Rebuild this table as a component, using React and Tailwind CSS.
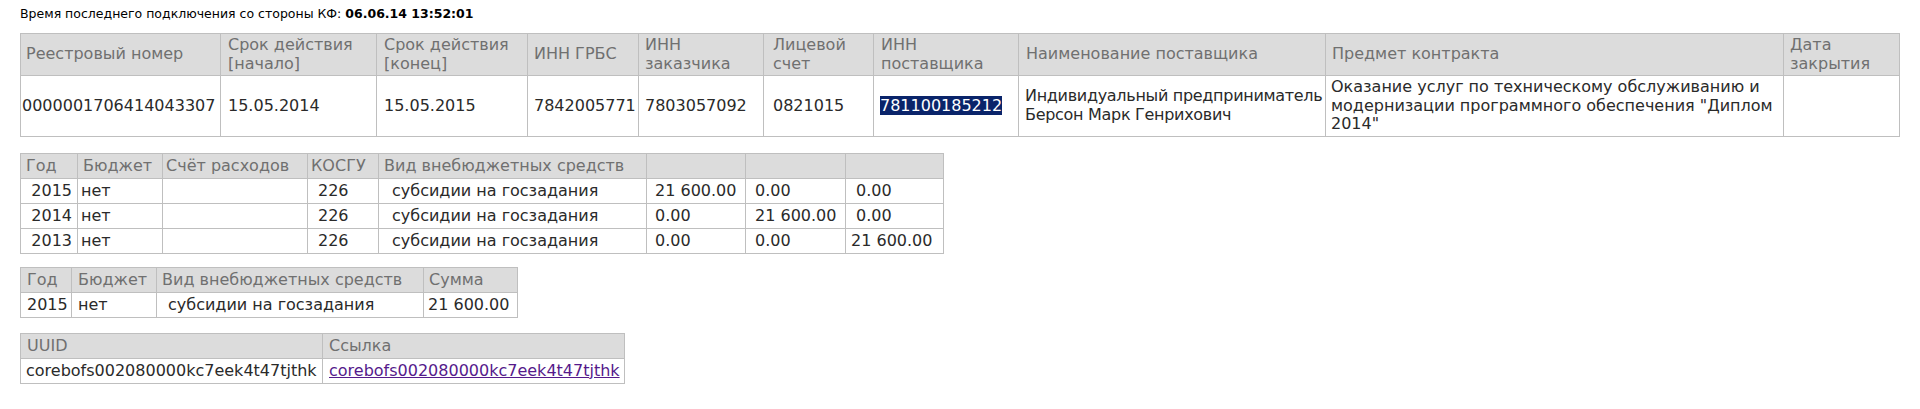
const th = "border border-[#bfbfbf] bg-[#dcdcdc] text-left align-middle font-normal text-[#707070]";
const td = "border border-[#bfbfbf] align-middle text-[#2a2a2a]";

const budgetRows = [
  { year: "2015", a: "21 600.00", b: "0.00", c: "0.00" },
  { year: "2014", a: "0.00", b: "21 600.00", c: "0.00" },
  { year: "2013", a: "0.00", b: "0.00", c: "21 600.00" },
];

function ContractTable() {
  return (
    <table className="table-fixed border-collapse leading-[18.5px]" style={{ width: 1879 }}>
      <colgroup>
        <col className="w-[200px]" />
        <col className="w-[156px]" />
        <col className="w-[151px]" />
        <col className="w-[111px]" />
        <col className="w-[125px]" />
        <col className="w-[110px]" />
        <col className="w-[145px]" />
        <col className="w-[307px]" />
        <col className="w-[458px]" />
        <col className="w-[116px]" />
      </colgroup>
      <thead>
        <tr>
          <th className={`${th} py-[2px] pl-[5px] pr-[2px]`}>Реестровый номер</th>
          <th className={`${th} py-[2px] pl-[7px] pr-[2px]`}>Срок действия [начало]</th>
          <th className={`${th} py-[2px] pl-[7px] pr-[2px]`}>Срок действия [конец]</th>
          <th className={`${th} py-[2px] pl-[6px] pr-[2px]`}>ИНН ГРБС</th>
          <th className={`${th} py-[2px] pl-[6px] pr-[2px]`}>ИНН заказчика</th>
          <th className={`${th} py-[2px] pl-[9px] pr-[2px]`}>Лицевой счет</th>
          <th className={`${th} py-[2px] pl-[7px] pr-[2px]`}>ИНН поставщика</th>
          <th className={`${th} py-[2px] pl-[7px] pr-[2px]`}>Наименование поставщика</th>
          <th className={`${th} py-[2px] pl-[6px] pr-[2px]`}>Предмет контракта</th>
          <th className={`${th} py-[2px] pl-[6px] pr-[2px]`}>Дата закрытия</th>
        </tr>
      </thead>
      <tbody>
        <tr>
          <td className={`${td} py-[2px] pl-[1px] pr-0`}>0000001706414043307</td>
          <td className={`${td} py-[2px] pl-[7px] pr-[2px]`}>15.05.2014</td>
          <td className={`${td} py-[2px] pl-[7px] pr-[2px]`}>15.05.2015</td>
          <td className={`${td} py-[2px] pl-[6px] pr-[2px]`}>7842005771</td>
          <td className={`${td} py-[2px] pl-[6px] pr-[2px]`}>7803057092</td>
          <td className={`${td} py-[2px] pl-[9px] pr-[2px]`}>0821015</td>
          <td className={`${td} py-[2px] pl-[6px] pr-[2px]`}>
            <span className="bg-[#0a246a] text-white">781100185212</span>
          </td>
          <td className={`${td} py-[2px] pl-[6px] pr-0 whitespace-nowrap tracking-[-0.3px]`}>
            Индивидуальный предприниматель
            <br />
            Берсон Марк Генрихович
          </td>
          <td className={`${td} py-[2px] pl-[5px] pr-[2px]`}>
            Оказание услуг по техническому обслуживанию и модернизации программного обеспечения "Диплом 2014"
          </td>
          <td className={`${td} py-[2px] px-[2px]`}></td>
        </tr>
      </tbody>
    </table>
  );
}

function BudgetTable() {
  return (
    <table className="table-fixed border-collapse leading-[18px]" style={{ width: 923 }}>
      <colgroup>
        <col className="w-[57px]" />
        <col className="w-[85px]" />
        <col className="w-[145px]" />
        <col className="w-[71px]" />
        <col className="w-[268px]" />
        <col className="w-[99px]" />
        <col className="w-[100px]" />
        <col className="w-[98px]" />
      </colgroup>
      <thead>
        <tr>
          <th className={`${th} py-[3px] pl-[5px]`}>Год</th>
          <th className={`${th} py-[3px] pl-[5px]`}>Бюджет</th>
          <th className={`${th} py-[3px] pl-[3px]`}>Счёт расходов</th>
          <th className={`${th} py-[3px] pl-[3px]`}>КОСГУ</th>
          <th className={`${th} py-[3px] pl-[5px]`}>Вид внебюджетных средств</th>
          <th className={th}></th>
          <th className={th}></th>
          <th className={th}></th>
        </tr>
      </thead>
      <tbody>
        {budgetRows.map((r) => (
          <tr key={r.year}>
            <td className={`${td} py-[3px] pr-[5px] text-right`}>{r.year}</td>
            <td className={`${td} py-[3px] pl-[3px]`}>нет</td>
            <td className={`${td} py-[3px]`}></td>
            <td className={`${td} py-[3px] pl-[10px]`}>226</td>
            <td className={`${td} py-[3px] pl-[13px]`}>субсидии на госзадания</td>
            <td className={`${td} py-[3px] pl-[8px] whitespace-nowrap`}>{r.a}</td>
            <td className={`${td} py-[3px] pl-[9px] whitespace-nowrap`}>{r.b}</td>
            <td className={`${td} py-[3px] ${r.c === "0.00" ? "pl-[10px]" : "pl-[5px]"} whitespace-nowrap`}>{r.c}</td>
          </tr>
        ))}
      </tbody>
    </table>
  );
}

function SumTable() {
  return (
    <table className="table-fixed border-collapse leading-[18px]" style={{ width: 497 }}>
      <colgroup>
        <col className="w-[51px]" />
        <col className="w-[85px]" />
        <col className="w-[267px]" />
        <col className="w-[94px]" />
      </colgroup>
      <thead>
        <tr>
          <th className={`${th} py-[3px] pl-[6px]`}>Год</th>
          <th className={`${th} py-[3px] pl-[6px]`}>Бюджет</th>
          <th className={`${th} py-[3px] pl-[5px]`}>Вид внебюджетных средств</th>
          <th className={`${th} py-[3px] pl-[5px]`}>Сумма</th>
        </tr>
      </thead>
      <tbody>
        <tr>
          <td className={`${td} py-[3px] pl-[6px]`}>2015</td>
          <td className={`${td} py-[3px] pl-[6px]`}>нет</td>
          <td className={`${td} py-[3px] pl-[11px]`}>субсидии на госзадания</td>
          <td className={`${td} py-[3px] pl-[4px] whitespace-nowrap`}>21 600.00</td>
        </tr>
      </tbody>
    </table>
  );
}

function LinkTable() {
  const uuid = "corebofs002080000kc7eek4t47tjthk";
  return (
    <table className="table-fixed border-collapse leading-[18px]" style={{ width: 604 }}>
      <colgroup>
        <col className="w-[302px]" />
        <col className="w-[302px]" />
      </colgroup>
      <thead>
        <tr>
          <th className={`${th} py-[3px] pl-[6px]`}>UUID</th>
          <th className={`${th} py-[3px] pl-[6px]`}>Ссылка</th>
        </tr>
      </thead>
      <tbody>
        <tr>
          <td className={`${td} py-[3px] pl-[5px] whitespace-nowrap`}>{uuid}</td>
          <td className={`${td} py-[3px] pl-[6px] whitespace-nowrap`}>
            <a href="#" className="text-[#551a8b] underline">
              {uuid}
            </a>
          </td>
        </tr>
      </tbody>
    </table>
  );
}

export default function App() {
  return (
    <div
      className="min-h-[409px] bg-white pl-[20px] text-[16px]"
      style={{ fontFamily: '"DejaVu Sans", Verdana, sans-serif' }}
    >
      <div className="pt-[6px] text-[12.5px] leading-[15px] text-black">
        Время последнего подключения со стороны КФ: <b>06.06.14 13:52:01</b>
      </div>
      <div className="mt-[12px]">
        <ContractTable />
      </div>
      <div className="mt-[16px]">
        <BudgetTable />
      </div>
      <div className="mt-[13px]">
        <SumTable />
      </div>
      <div className="mt-[15px]">
        <LinkTable />
      </div>
    </div>
  );
}
